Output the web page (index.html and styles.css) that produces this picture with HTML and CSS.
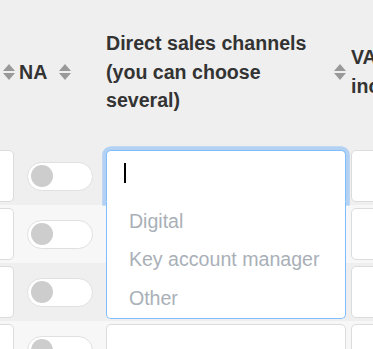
FILE: index.html
```html
<!DOCTYPE html>
<html lang="en">
<head>
  <meta charset="UTF-8">
  <title>Sales channels</title>
  <link rel="stylesheet" href="styles.css">
</head>
<body>
  <div class="grid">
    <div class="row head">
      <div class="th end">
        <svg class="sort" viewBox="0 0 12 16"><path d="M0 7 6 0 12 7Z M0 9 12 9 6 16Z"/></svg>
      </div>
      <div class="th">
        <span class="label">NA</span>
        <svg class="sort" viewBox="0 0 12 16"><path d="M0 7 6 0 12 7Z M0 9 12 9 6 16Z"/></svg>
      </div>
      <div class="th">
        <span class="label">Direct sales channels (you can choose several)</span>
        <svg class="sort" viewBox="0 0 12 16"><path d="M0 7 6 0 12 7Z M0 9 12 9 6 16Z"/></svg>
      </div>
      <div class="th">
        <span class="label">VAT included</span>
        <svg class="sort" viewBox="0 0 12 16"><path d="M0 7 6 0 12 7Z M0 9 12 9 6 16Z"/></svg>
      </div>
    </div>

    <div class="row odd">
      <div class="td"><div class="field"></div></div>
      <div class="td center"><div class="toggle"><span class="knob"></span></div></div>
      <div class="td">
        <div class="select open">
          <div class="field focus"><span class="caret"></span></div>
          <div class="dropdown">
            <div class="option">Digital</div>
            <div class="option">Key account manager</div>
            <div class="option">Other</div>
          </div>
        </div>
      </div>
      <div class="td"><div class="field"></div></div>
    </div>

    <div class="row even">
      <div class="td"><div class="field"></div></div>
      <div class="td center"><div class="toggle"><span class="knob"></span></div></div>
      <div class="td"><div class="field"></div></div>
      <div class="td"><div class="field"></div></div>
    </div>

    <div class="row odd">
      <div class="td"><div class="field"></div></div>
      <div class="td center"><div class="toggle"><span class="knob"></span></div></div>
      <div class="td"><div class="field"></div></div>
      <div class="td"><div class="field"></div></div>
    </div>

    <div class="row even">
      <div class="td"><div class="field"></div></div>
      <div class="td center"><div class="toggle"><span class="knob"></span></div></div>
      <div class="td"><div class="field"></div></div>
      <div class="td"><div class="field"></div></div>
    </div>
  </div>
</body>
</html>
```

FILE: styles.css
```css
html, body {
  margin: 0;
  padding: 0;
  overflow: hidden;
}

body {
  font-family: 'Liberation Sans', Arial, sans-serif;
  font-size: 19.6px;
  line-height: 28.8px;
  color: #333;
  background: #efefef;
  width: 373px;
  height: 349px;
}

.grid {
  margin-left: -43.5px;
  width: 500px;
}

.row {
  display: grid;
  grid-template-columns: 60px 87px 245px 100px;
}

.head {
  height: 147px;
  background: #efefef;
}

.odd {
  background: #efefef;
}

.even {
  background: #f7f7f7;
}

.th {
  display: flex;
  align-items: center;
  gap: 12px;
  padding: 0 2.5px 3px;
  font-weight: bold;
  color: #333;
}

.th.end {
  justify-content: flex-end;
  padding-right: 1.5px;
}

.label {
  flex: 0 1 auto;
}

.sort {
  flex: none;
  width: 12px;
  height: 16px;
  fill: #999;
}

.td {
  height: 58px;
  box-sizing: border-box;
  padding: 3px 2.4px;
}

.td.center {
  display: flex;
  align-items: center;
  justify-content: center;
}

.field {
  box-sizing: border-box;
  height: 52px;
  background: #fff;
  border: 1px solid #dcdcdc;
  border-radius: 5px;
}

.toggle {
  box-sizing: border-box;
  width: 66px;
  height: 29px;
  border: 1px solid #e0e0e0;
  border-radius: 15px;
  background: #fff;
  display: flex;
  align-items: center;
  padding-left: 3px;
}

.knob {
  width: 22px;
  height: 22px;
  border-radius: 50%;
  background: #cdcdcd;
}

.select {
  position: relative;
  z-index: 2;
}

.field.focus {
  border-color: #80bdff;
  border-bottom-color: #fff;
  border-radius: 5px 5px 0 0;
  box-shadow: 0 0 0 3.8px rgba(0, 123, 255, 0.25);
  padding: 12px 0 0 17px;
}

.caret {
  display: block;
  width: 2px;
  height: 20px;
  background: #000;
}

.dropdown {
  position: absolute;
  top: 100%;
  left: 0;
  right: 0;
  background: #fff;
  border: 1px solid #80bdff;
  border-top: 0;
  border-radius: 0 0 5px 5px;
  padding: 0 0 1px;
}

.option {
  padding: 4.8px 22px;
  color: #a9b0b8;
}
```
